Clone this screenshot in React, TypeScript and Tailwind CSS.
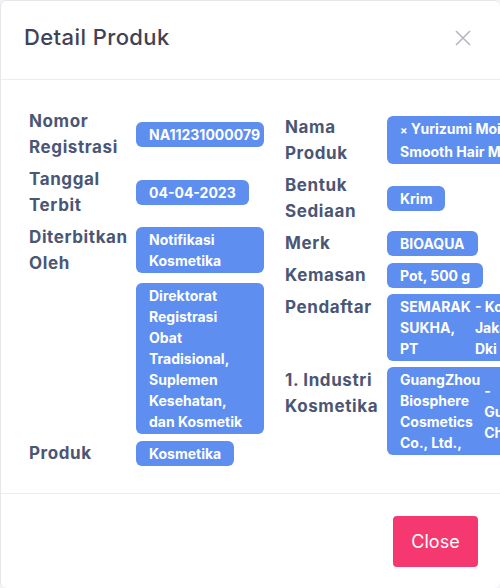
import React from "react";

const Badge = ({
  children,
  className = "",
  full = false,
}: {
  children: React.ReactNode;
  className?: string;
  full?: boolean;
}) => (
  <div
    className={`${full ? "w-full" : "w-fit max-w-full"} rounded-[6px] bg-[#5d8ef0] px-[13px] py-[2px] text-[14px] font-bold leading-[21px] text-white ${className}`}
  >
    {children}
  </div>
);

const Label = ({ children }: { children?: React.ReactNode }) => (
  <div className="self-start text-[17px] font-bold leading-[26px] tracking-[0.6px] text-[#4b5675]">{children}</div>
);

export default function App() {
  return (
    <div
      className="h-[588px] w-[500px] overflow-hidden bg-[#f3f4f6]"
      style={{ fontFamily: "Inter, 'Noto Sans', sans-serif" }}
    >
      <div className="flex h-[588px] w-[500px] flex-col overflow-hidden rounded-[6px] border-l border-t border-[#e5e7eb] bg-white">
        <div className="flex h-[79px] shrink-0 items-center justify-between border-b border-[#ebedf2] pb-[5px] pl-[23px] pr-[29px]">
          <div className="text-[22px] font-medium tracking-[0.4px] text-[#3f4254]">Detail Produk</div>
          <svg width="16" height="16" viewBox="0 0 16 16" className="text-[#b5b5c3]">
            <path d="M1 1L15 15M15 1L1 15" stroke="currentColor" strokeWidth="1.6" />
          </svg>
        </div>

        <div className="flex h-[414px] shrink-0 overflow-hidden border-b border-[#ebedf2] pl-[28px] pt-[28px]">
          <div className="grid w-[235px] shrink-0 grid-cols-[107px_128px] content-start gap-y-[6px]">
            <Label>
              Nomor
              <br />
              Registrasi
            </Label>
            <div className="self-center">
              <Badge>NA11231000079</Badge>
            </div>
            <Label>
              Tanggal
              <br />
              Terbit
            </Label>
            <div className="self-center">
              <Badge>04-04-2023</Badge>
            </div>
            <Label>
              Diterbitkan
              <br />
              Oleh
            </Label>
            <div className="self-center">
              <Badge full>Notifikasi Kosmetika</Badge>
            </div>
            <Label />
            <div className="mt-[1px] self-center">
              <Badge full>
                Direktorat
                <br />
                Registrasi
                <br />
                Obat
                <br />
                Tradisional,
                <br />
                Suplemen
                <br />
                Kesehatan,
                <br />
                dan Kosmetik
              </Badge>
            </div>
            <Label>Produk</Label>
            <div className="self-center">
              <Badge>Kosmetika</Badge>
            </div>
          </div>

          <div className="ml-[21px] grid w-[320px] shrink-0 grid-cols-[102px_218px] content-start gap-y-[6px] pt-[6px]">
            <Label>
              Nama
              <br />
              Produk
            </Label>
            <div className="self-center">
              <Badge className="whitespace-nowrap">
                <span className="text-[11px]">×</span> Yurizumi Moisture
                <br />
                Smooth Hair Mask
              </Badge>
            </div>
            <Label>
              Bentuk
              <br />
              Sediaan
            </Label>
            <div className="self-center">
              <Badge>Krim</Badge>
            </div>
            <Label>Merk</Label>
            <div className="self-center">
              <Badge>BIOAQUA</Badge>
            </div>
            <Label>Kemasan</Label>
            <div className="self-center">
              <Badge>Pot, 500 g</Badge>
            </div>
            <Label>Pendaftar</Label>
            <div className="self-start">
              <Badge className="whitespace-nowrap">
                <div className="flex items-center gap-[4px]">
                  <div className="shrink-0">
                    SEMARAK
                    <br />
                    SUKHA,
                    <br />
                    PT
                  </div>
                  <div>
                    - Kota
                    <br />
                    Jakarta Utara,
                    <br />
                    Dki Jakarta
                  </div>
                </div>
              </Badge>
            </div>
            <Label>
              1. Industri
              <br />
              Kosmetika
            </Label>
            <div className="self-start">
              <Badge className="whitespace-nowrap">
                <div className="flex items-center gap-[4px]">
                  <div className="shrink-0">
                    GuangZhou
                    <br />
                    Biosphere
                    <br />
                    Cosmetics
                    <br />
                    Co., Ltd.,
                  </div>
                  <div>
                    -
                    <br />
                    Guangzhou,
                    <br />
                    China
                  </div>
                </div>
              </Badge>
            </div>
          </div>
        </div>

        <div className="flex flex-1 items-start justify-end pr-[22px] pt-[22px]">
          <button className="h-[51px] w-[85px] rounded-[4px] bg-[#f5386f] text-[18px] text-white">Close</button>
        </div>
      </div>
    </div>
  );
}
